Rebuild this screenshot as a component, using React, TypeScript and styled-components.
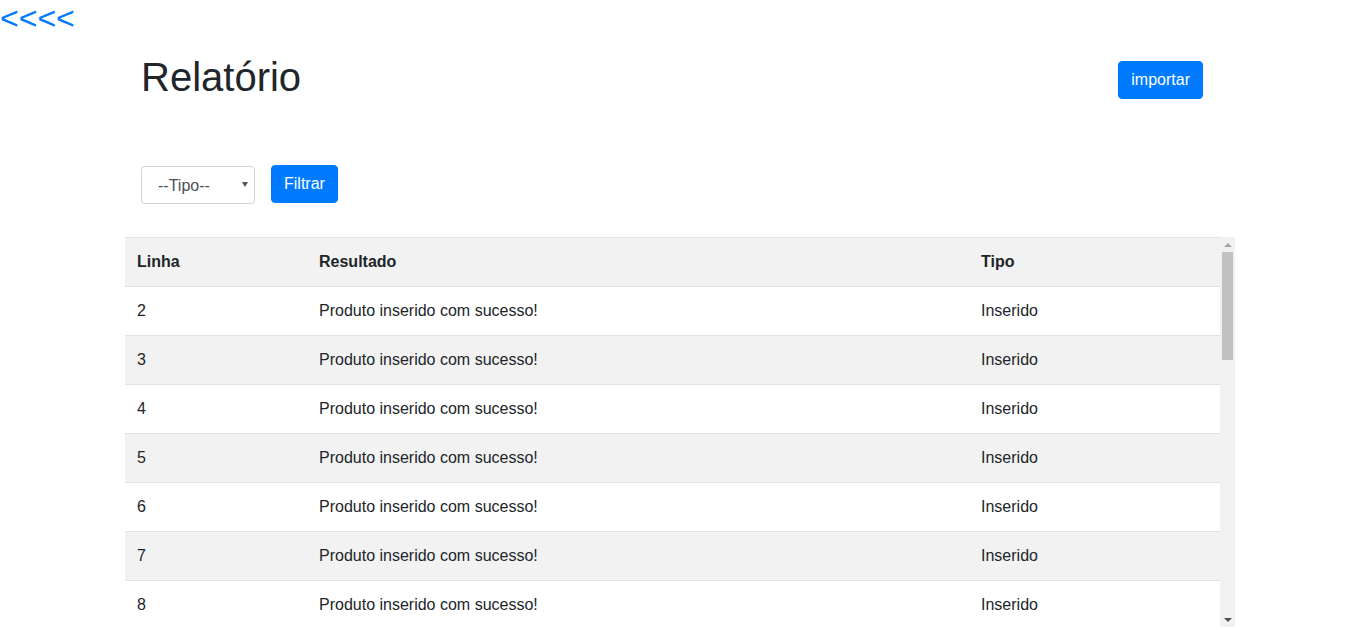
import React from 'react'
import styled, { createGlobalStyle } from 'styled-components'

const GlobalStyle = createGlobalStyle`
  body {
    margin: 0;
    font-family: "Liberation Sans", Arial, sans-serif;
    font-size: 16px;
    line-height: 1.5;
    color: #212529;
    background: #fff;
  }
`

const BackLink = styled.a`
  display: block;
  font-size: 32px;
  line-height: 1.15;
  color: #007bff;
  text-decoration: none;
  height: 37px;
`
const Container = styled.div`
  width: 1110px;
  margin: 0 auto;
`
const Header = styled.div`
  display: flex;
  justify-content: space-between;
  align-items: flex-start;
  padding: 16px 32px 0 16px;
`
const Title = styled.h1`
  margin: 0;
  font-size: 40px;
  font-weight: 400;
  line-height: 1.2;
`
const Button = styled.button`
  font-family: inherit;
  font-size: 16px;
  line-height: 24px;
  padding: 6px 12px;
  border: 1px solid #007bff;
  border-radius: 4px;
  background: #007bff;
  color: #fff;
  cursor: pointer;
`
const ImportButton = styled(Button)`
  margin-top: 8px;
`
const FilterBar = styled.div`
  display: flex;
  align-items: flex-start;
  gap: 16px;
  padding: 64px 16px 0;
`
const SelectWrap = styled.div`
  position: relative;
  margin-top: 1px;
  &::after {
    content: '';
    position: absolute;
    right: 7px;
    top: 16px;
    border-left: 3px solid transparent;
    border-right: 3px solid transparent;
    border-top: 5px solid #555;
    pointer-events: none;
  }
`
const Select = styled.select`
  appearance: none;
  width: 114px;
  height: 38px;
  padding: 0 16px;
  font-family: inherit;
  font-size: 16px;
  color: #495057;
  background: #fff;
  border: 1px solid #ced4da;
  border-radius: 4px;
`
const Frame = styled.div`
  display: flex;
  margin-top: 33px;
  height: 390px;
`
const TableArea = styled.div`
  flex: 1;
  overflow: hidden;
`
const ScrollBar = styled.div`
  width: 15px;
  display: flex;
  flex-direction: column;
  background: #f1f1f1;
`
const Arrow = styled.div<{ $down?: boolean }>`
  height: 15px;
  display: flex;
  align-items: center;
  justify-content: center;
  &::before {
    content: '';
    border-left: 4px solid transparent;
    border-right: 4px solid transparent;
    ${p =>
      p.$down
        ? 'border-top: 4px solid #505050;'
        : 'border-bottom: 4px solid #a3a3a3;'}
  }
`
const Track = styled.div`
  flex: 1;
  padding: 0 2px;
`
const Thumb = styled.div`
  height: 108px;
  background: #c1c1c1;
`
const Table = styled.table`
  width: 100%;
  table-layout: fixed;
  border-collapse: collapse;
`
const Row = styled.tr<{ $shade: boolean }>`
  background: ${p => (p.$shade ? '#f2f2f2' : '#fff')};
`
const Cell = styled.td<{ $head?: boolean }>`
  padding: 12px;
  border-top: 1px solid #dee2e6;
  font-weight: ${p => (p.$head ? 700 : 400)};
  text-align: left;
  vertical-align: top;
  white-space: nowrap;
`

const rows = Array.from({ length: 26 }, (_, i) => i + 2)

const App = () => (
  <>
    <GlobalStyle />
    <BackLink href="#">&lt;&lt;&lt;&lt;</BackLink>
    <Container>
      <Header>
        <Title>Relatório</Title>
        <ImportButton>importar</ImportButton>
      </Header>
      <FilterBar>
        <SelectWrap>
          <Select defaultValue="">
            <option value="">--Tipo--</option>
            <option value="Inserido">Inserido</option>
            <option value="Atualizado">Atualizado</option>
          </Select>
        </SelectWrap>
        <Button>Filtrar</Button>
      </FilterBar>
      <Frame>
        <TableArea>
          <Table>
            <colgroup>
              <col style={{ width: 182 }} />
              <col style={{ width: 662 }} />
              <col />
            </colgroup>
            <tbody>
              <Row $shade>
                <Cell $head>Linha</Cell>
                <Cell $head>Resultado</Cell>
                <Cell $head>Tipo</Cell>
              </Row>
              {rows.map((n, i) => (
                <Row key={n} $shade={i % 2 === 1}>
                  <Cell>{n}</Cell>
                  <Cell>Produto inserido com sucesso!</Cell>
                  <Cell>Inserido</Cell>
                </Row>
              ))}
            </tbody>
          </Table>
        </TableArea>
        <ScrollBar>
          <Arrow />
          <Track>
            <Thumb />
          </Track>
          <Arrow $down />
        </ScrollBar>
      </Frame>
    </Container>
  </>
)

export default App
